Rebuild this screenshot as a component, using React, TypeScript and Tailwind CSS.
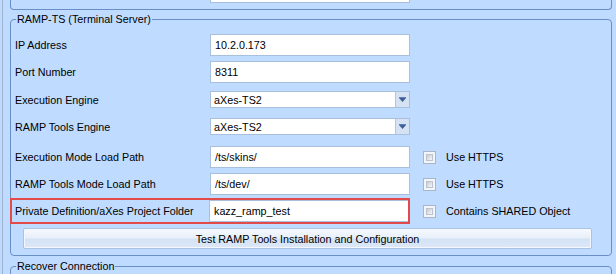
const GROUP_BORDER = "border-[#6a8fc7]";

function TextBox({ value, className = "" }: { value?: string; className?: string }) {
  return (
    <div
      className={`h-[22px] w-[200px] bg-white border border-[#a9c0dd] pl-[4px] flex items-center text-black ${className}`}
    >
      {value}
    </div>
  );
}

function ComboBox({ value }: { value: string }) {
  return (
    <div className="h-[17px] w-[200px] flex bg-white border border-[#a9c0dd]">
      <div className="flex-1 pl-[3px] flex items-center text-black">{value}</div>
      <div className="w-[14px] bg-[#d4e2f4] border-l border-[#b3c6df] flex items-center justify-center">
        <svg width="7" height="5" viewBox="0 0 7 5">
          <rect x="0" y="0" width="7" height="1" fill="#5d7fb3" />
          <polygon points="0,1 7,1 3.5,5" fill="#3f5f94" />
        </svg>
      </div>
    </div>
  );
}

function CheckBox({ label }: { label: string }) {
  return (
    <div className="flex items-center">
      <div className="w-[13px] h-[13px] border border-[#a9b6c7] bg-[#f2f5f9] p-[2px]">
        <div className="w-full h-full border border-[#bcc3cc] bg-[linear-gradient(135deg,#c8cbd0_0%,#f6f7f8_100%)]" />
      </div>
      <span className="ml-[10px]">{label}</span>
    </div>
  );
}

function Row({
  label,
  children,
  className = "",
}: {
  label: string;
  children: React.ReactNode;
  className?: string;
}) {
  return (
    <div className={`flex items-center ${className}`}>
      <div className="w-[195px]">{label}</div>
      {children}
    </div>
  );
}

export default function App() {
  return (
    <div className="w-[616px] h-[274px] overflow-hidden bg-[#bfdbff] flex text-[10.75px] leading-[14px] text-black font-['Liberation_Sans',Arial,sans-serif]">
      {/* outer panel edge */}
      <div className="ml-[2px] w-px bg-[#9cb2cf]" />

      <div className="flex-1 flex flex-col pl-[7px] pr-[4px]">
        {/* previous group, only its bottom is visible */}
        <div className={`h-[10px] shrink-0 border-x border-b rounded-b-[4px] ${GROUP_BORDER} pl-[199px]`}>
          <div className="w-[200px] h-[3px] bg-white border-x border-b border-[#a9c0dd]" />
        </div>

        {/* RAMP-TS group */}
        <fieldset className={`mt-[2px] shrink-0 border rounded-[4px] ${GROUP_BORDER} pl-[4px] pr-[4px] pb-[6px]`}>
          <legend className="ml-[1px] px-[1px] leading-[14px]">RAMP-TS (Terminal Server)</legend>

          <Row label="IP Address" className="mt-[8px]">
            <TextBox value="10.2.0.173" />
          </Row>
          <Row label="Port Number" className="mt-[5px]">
            <TextBox value="8311" />
          </Row>
          <Row label="Execution Engine" className="mt-[8px]">
            <ComboBox value="aXes-TS2" />
          </Row>
          <Row label="RAMP Tools Engine" className="mt-[10px]">
            <ComboBox value="aXes-TS2" />
          </Row>
          <Row label="Execution Mode Load Path" className="mt-[11px]">
            <TextBox value="/ts/skins/" />
            <div className="ml-[13px]">
              <CheckBox label="Use HTTPS" />
            </div>
          </Row>
          <Row label="RAMP Tools Mode Load Path" className="mt-[5px]">
            <TextBox value="/ts/dev/" />
            <div className="ml-[13px]">
              <CheckBox label="Use HTTPS" />
            </div>
          </Row>

          {/* highlighted row */}
          <div className="mt-[3px] -ml-[5px] flex items-center">
            <div className="w-[400px] h-[26px] border-2 border-[#e34a4a] pl-[3px] flex items-center">
              <div className="w-[195px]">Private Definition/aXes Project Folder</div>
              <TextBox value="kazz_ramp_test" className="w-[197px] h-[21px] border-r-0" />
            </div>
            <div className="ml-[13px]">
              <CheckBox label="Contains SHARED Object" />
            </div>
          </div>

          <button className="mt-[4px] ml-[8px] w-[569px] h-[21px] rounded-[2px] border border-[#aac3e3] shadow-[inset_0_0_0_1px_#f4f8fe] bg-[linear-gradient(to_bottom,#f6f9fe_0%,#e8eff9_48%,#d3e2f6_52%,#dde8f7_100%)] flex items-center justify-center text-black">
            Test RAMP Tools Installation and Configuration
          </button>
        </fieldset>

        {/* next group, only its top is visible */}
        <fieldset className={`mt-[3px] h-[40px] shrink-0 border rounded-[4px] ${GROUP_BORDER} pl-[4px]`}>
          <legend className="ml-[1px] px-[1px] leading-[14px]">Recover Connection</legend>
        </fieldset>
      </div>
    </div>
  );
}
